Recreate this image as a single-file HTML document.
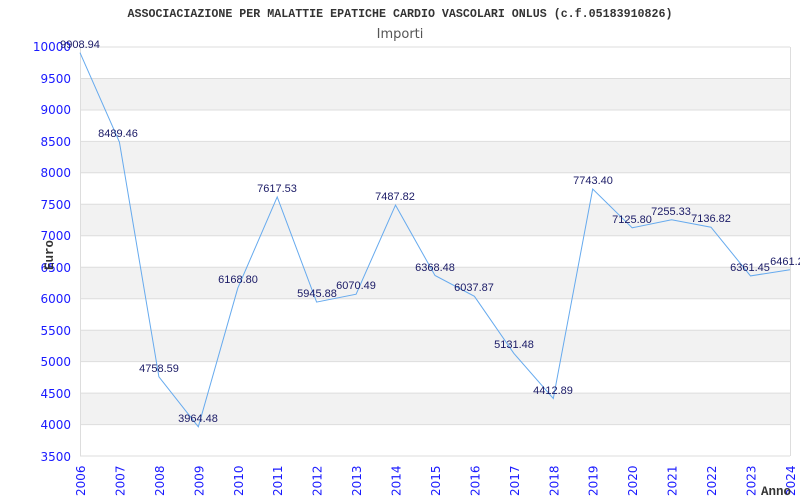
<!DOCTYPE html>
<html><head><meta charset="utf-8"><style>body{margin:0;background:#fff}</style></head><body>
<svg width="800" height="500" xmlns="http://www.w3.org/2000/svg" style="display:block">
<rect width="800" height="500" fill="#fff"/>
<text x="400" y="17" text-anchor="middle" font-family="Liberation Mono, monospace" font-weight="bold" font-size="11.5" fill="#333" textLength="545" lengthAdjust="spacingAndGlyphs">ASSOCIACIAZIONE PER MALATTIE EPATICHE CARDIO VASCOLARI ONLUS (c.f.05183910826)</text>
<text x="400" y="38" text-anchor="middle" font-family="DejaVu Sans, sans-serif" font-size="13" fill="#555">Importi</text>
<g fill="#f2f2f2">
<rect x="80" y="78.5" width="710" height="31.5"/>
<rect x="80" y="141.4" width="710" height="31.5"/>
<rect x="80" y="204.3" width="710" height="31.5"/>
<rect x="80" y="267.2" width="710" height="31.5"/>
<rect x="80" y="330.2" width="710" height="31.5"/>
<rect x="80" y="393.1" width="710" height="31.5"/>
</g>
<g stroke="#ddd" stroke-width="1">
<line x1="80" x2="790" y1="47" y2="47"/><line x1="80" x2="790" y1="78.5" y2="78.5"/><line x1="80" x2="790" y1="110" y2="110"/><line x1="80" x2="790" y1="141.4" y2="141.4"/><line x1="80" x2="790" y1="172.8" y2="172.8"/><line x1="80" x2="790" y1="204.3" y2="204.3"/><line x1="80" x2="790" y1="235.8" y2="235.8"/><line x1="80" x2="790" y1="267.2" y2="267.2"/><line x1="80" x2="790" y1="298.7" y2="298.7"/><line x1="80" x2="790" y1="330.2" y2="330.2"/><line x1="80" x2="790" y1="361.6" y2="361.6"/><line x1="80" x2="790" y1="393.1" y2="393.1"/><line x1="80" x2="790" y1="424.6" y2="424.6"/><line x1="80" x2="790" y1="456" y2="456"/>
<line x1="80.5" x2="80.5" y1="47" y2="456"/><line x1="790.5" x2="790.5" y1="47" y2="456"/>
</g>
<g font-family="DejaVu Sans, sans-serif" font-size="12" fill="#1a1aff" text-anchor="end">
<text x="71" y="51">10000</text><text x="71" y="83">9500</text><text x="71" y="114">9000</text><text x="71" y="146">8500</text><text x="71" y="177">8000</text><text x="71" y="209">7500</text><text x="71" y="240">7000</text><text x="71" y="272">6500</text><text x="71" y="303">6000</text><text x="71" y="335">5500</text><text x="71" y="366">5000</text><text x="71" y="398">4500</text><text x="71" y="429">4000</text><text x="71" y="461">3500</text>
</g>
<g font-family="DejaVu Sans, sans-serif" font-size="12" fill="#1a1aff">
<text transform="translate(85,496) rotate(-90)">2006</text><text transform="translate(124.4,496) rotate(-90)">2007</text><text transform="translate(163.9,496) rotate(-90)">2008</text><text transform="translate(203.3,496) rotate(-90)">2009</text><text transform="translate(242.8,496) rotate(-90)">2010</text><text transform="translate(282.2,496) rotate(-90)">2011</text><text transform="translate(321.6,496) rotate(-90)">2012</text><text transform="translate(361.1,496) rotate(-90)">2013</text><text transform="translate(400.5,496) rotate(-90)">2014</text><text transform="translate(440,496) rotate(-90)">2015</text><text transform="translate(479.4,496) rotate(-90)">2016</text><text transform="translate(518.8,496) rotate(-90)">2017</text><text transform="translate(558.3,496) rotate(-90)">2018</text><text transform="translate(597.7,496) rotate(-90)">2019</text><text transform="translate(637.2,496) rotate(-90)">2020</text><text transform="translate(676.6,496) rotate(-90)">2021</text><text transform="translate(716,496) rotate(-90)">2022</text><text transform="translate(755.5,496) rotate(-90)">2023</text><text transform="translate(795,496) rotate(-90)">2024</text>
</g>
<text transform="translate(53,270) rotate(-90)" font-family="Liberation Mono, monospace" font-weight="bold" font-size="12.5" fill="#333">Euro</text>
<text x="761" y="495" font-family="Liberation Mono, monospace" font-weight="bold" font-size="12.5" fill="#333">Anno</text>
<polyline fill="none" stroke="#66aaee" stroke-width="1" points="80,52.7 119.4,142 158.9,376.8 198.3,426.8 237.8,288.1 277.2,196.9 316.6,302.1 356.1,294.2 395.5,205.1 435,275.5 474.4,296.3 513.8,353.3 553.3,398.5 592.7,189 632.2,227.8 671.6,219.7 711,227.2 750.5,275.9 790,269.7"/>
<g font-family="Liberation Sans, sans-serif" font-size="11" fill="#1a1a66" text-anchor="middle">
<text x="80" y="48">9908.94</text><text x="118" y="137">8489.46</text><text x="159" y="372">4758.59</text><text x="198" y="422">3964.48</text><text x="238" y="283">6168.80</text><text x="277" y="192">7617.53</text><text x="317" y="297">5945.88</text><text x="356" y="289">6070.49</text><text x="395" y="200">7487.82</text><text x="435" y="271">6368.48</text><text x="474" y="291">6037.87</text><text x="514" y="348">5131.48</text><text x="553" y="394">4412.89</text><text x="593" y="184">7743.40</text><text x="632" y="223">7125.80</text><text x="671" y="215">7255.33</text><text x="711" y="222">7136.82</text><text x="750" y="271">6361.45</text><text x="790" y="265">6461.23</text>
</g>
</svg>
</body></html>
